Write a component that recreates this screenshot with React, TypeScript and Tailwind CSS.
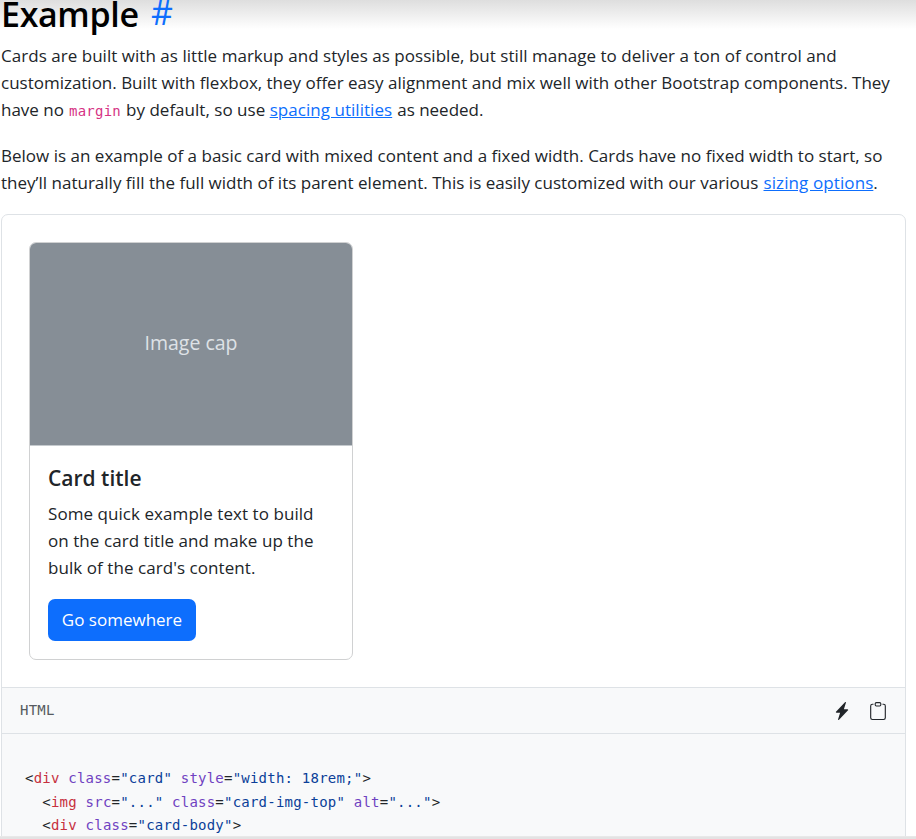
import type { ReactNode } from "react";

function Tag({ children }: { children: ReactNode }) {
  return <span className="text-[#c6303e]">{children}</span>;
}

function Attr({ name, value }: { name: string; value: string }) {
  return (
    <>
      {" "}
      <span className="text-[#6f42c1]">{name}</span>=<span className="text-[#0b3f99]">"{value}"</span>
    </>
  );
}

function LightningIcon() {
  return (
    <svg width="18" height="18" viewBox="0 0 16 16" fill="currentColor">
      <path d="M11.251.068a.5.5 0 0 1 .227.58L9.677 6.5H13a.5.5 0 0 1 .364.843l-8 8.5a.5.5 0 0 1-.842-.49L6.323 9.5H3a.5.5 0 0 1-.364-.843l8-8.5a.5.5 0 0 1 .615-.09z" />
    </svg>
  );
}

function ClipboardIcon() {
  return (
    <svg width="18" height="18" viewBox="0 0 16 16" fill="currentColor">
      <path d="M4 1.5H3a2 2 0 0 0-2 2V14a2 2 0 0 0 2 2h10a2 2 0 0 0 2-2V3.5a2 2 0 0 0-2-2h-1v1h1a1 1 0 0 1 1 1V14a1 1 0 0 1-1 1H3a1 1 0 0 1-1-1V3.5a1 1 0 0 1 1-1h1z" />
      <path d="M9.5 1a.5.5 0 0 1 .5.5v1a.5.5 0 0 1-.5.5h-3a.5.5 0 0 1-.5-.5v-1a.5.5 0 0 1 .5-.5zm-3-1A1.5 1.5 0 0 0 5 1.5v1A1.5 1.5 0 0 0 6.5 4h3A1.5 1.5 0 0 0 11 2.5v-1A1.5 1.5 0 0 0 9.5 0z" />
    </svg>
  );
}

export default function App() {
  return (
    <div className="relative flex h-[839px] w-[916px] flex-col overflow-hidden bg-white bg-linear-to-b from-[#dedede] to-white bg-[length:100%_29px] bg-no-repeat pl-px font-['Open_Sans','Noto_Sans',sans-serif] text-[17px] leading-[27px] text-[#212529]">
      <div className="flex h-[42px] shrink-0 items-start whitespace-nowrap leading-[28px] text-black">
        <h2 className="w-[150px] text-[34px] font-semibold tracking-[-0.35px]">Example</h2>
        <a className="-mt-[2px] text-[34px] font-normal text-[#0d6efd]">#</a>
      </div>
      <p className="h-[100px] shrink-0 whitespace-nowrap">
        <span className="block tracking-[0.035px]">Cards are built with as little markup and styles as possible, but still manage to deliver a ton of control and</span>
        <span className="block tracking-[-0.01px]">customization. Built with flexbox, they offer easy alignment and mix well with other Bootstrap components. They</span>
        <span className="flex">
          <span className="w-[68px]">have no</span>
          <code className="w-[57px] pt-[3px] font-['DejaVu_Sans_Mono',monospace] text-[14px] leading-[24px] tracking-[0.23px] text-[#d63384]">margin</code>
          <span className="w-[143.7px] tracking-[0.02px]">by default, so use</span>
          <a className="mr-[5px] tracking-[0.04px] text-[#0d6efd] underline">spacing utilities</a>
          <span>as needed.</span>
        </span>
      </p>
      <p className="h-[72px] shrink-0 whitespace-nowrap">
        <span className="block tracking-[0.01px]">Below is an example of a basic card with mixed content and a fixed width. Cards have no fixed width to start, so</span>
        <span className="flex">
          <span className="w-[762.5px] tracking-[0.01px]">they’ll naturally fill the full width of its parent element. This is easily customized with our various</span>
          <a className="tracking-[0.1px] text-[#0d6efd] underline">sizing options</a>.
        </span>
      </p>
      <div className="flex h-[640px] w-[905px] shrink-0 flex-col rounded-t-[7px] border border-[#dee2e6] bg-white">
        <div className="h-[473px] shrink-0 border-b border-[#dee2e6] p-[27px]">
          <div className="flex h-[418px] w-[324px] flex-col overflow-hidden rounded-[7px] border border-[#d0d1d2]">
            <div className="flex h-[203px] shrink-0 items-center justify-center border-b border-[#c5cace] bg-[#868e96] pb-[3px] text-[19.5px] text-[#dee2e6]">Image cap</div>
            <div className="flex flex-col items-start px-[18px] pt-[19px] whitespace-nowrap">
              <h5 className="text-[21px] leading-[27px] font-semibold">Card title</h5>
              <p className="mt-[8px] tracking-[0.06px]">
                <span className="block">Some quick example text to build</span>
                <span className="block">on the card title and make up the</span>
                <span className="block">bulk of the card's content.</span>
              </p>
              <button className="mt-[18px] h-[42px] w-[148px] rounded-[7px] bg-[#0d6efd] pb-[2px] text-white">Go somewhere</button>
            </div>
          </div>
        </div>
        <div className="flex h-[46px] shrink-0 items-center border-b border-[#dee2e6] bg-[#f8f9fa] px-[18px]">
          <span className="font-['DejaVu_Sans_Mono',monospace] text-[14px] tracking-[0.23px] text-[#565b60]">HTML</span>
          <div className="ml-auto flex gap-[18px] pt-px">
            <LightningIcon />
            <ClipboardIcon />
          </div>
        </div>
        <div className="grow bg-[#f8f9fa] pt-[33px] pl-[23px] font-['DejaVu_Sans_Mono',monospace] text-[14px] leading-[23.6px] tracking-[0.22px] whitespace-pre">
          <div>&lt;<Tag>div</Tag><Attr name="class" value="card" /><Attr name="style" value="width: 18rem;" />&gt;</div>
          <div>{"  "}&lt;<Tag>img</Tag><Attr name="src" value="..." /><Attr name="class" value="card-img-top" /><Attr name="alt" value="..." />&gt;</div>
          <div>{"  "}&lt;<Tag>div</Tag><Attr name="class" value="card-body" />&gt;</div>
        </div>
      </div>
      <div className="absolute inset-x-0 bottom-0 h-[3px] border-t border-[#e8e8e8] bg-[#e3e3e3]" />
    </div>
  );
}
